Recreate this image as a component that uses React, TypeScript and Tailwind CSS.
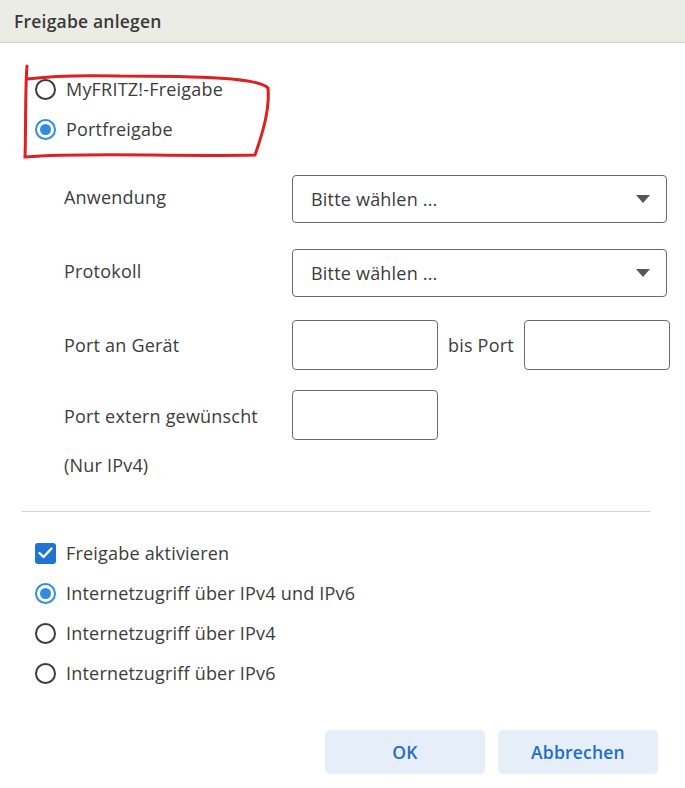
import React from "react";

const font = { fontFamily: '"Open Sans", "Noto Sans", sans-serif' };
const txt = "text-[18px] tracking-[0.2px] text-[#3c3c3c]";

function Radio({ checked, label }: { checked?: boolean; label: string }) {
  return (
    <div className="flex items-center h-[40px]">
      <div className="w-[44px] flex justify-center">
        {checked ? (
          <div className="w-[21px] h-[21px] rounded-full border-2 border-[#2f8be0] flex items-center justify-center">
            <div className="w-[11px] h-[11px] rounded-full bg-[#2f8be0]" />
          </div>
        ) : (
          <div className="w-[21px] h-[21px] rounded-full border-2 border-[#3b3b3b]" />
        )}
      </div>
      <span className={"ml-[-1px] " + txt}>{label}</span>
    </div>
  );
}

function Select() {
  return (
    <div className="w-[375px] h-[48px] border border-[#6b6b6b] rounded-[4px] flex items-center justify-between pl-[18px] pr-[16px]">
      <span className={txt}>Bitte wählen ...</span>
      <svg width="14" height="8" viewBox="0 0 14 8"><path d="M0 0 L14 0 L7 8 Z" fill="#555" /></svg>
    </div>
  );
}

function Input() {
  return <div className="w-[146px] h-[50px] border border-[#6b6b6b] rounded-[4px]" />;
}

export default function App() {
  return (
    <div className="w-[685px] h-[788px] bg-white relative" style={font}>
      <div className="h-[43px] bg-[#ecece6] border-b border-[#d2d2d0] flex items-center pl-[14px]">
        <span className="text-[17.5px] tracking-[0.2px] font-semibold text-[#3a3a3a]">Freigabe anlegen</span>
      </div>
      <div className="pl-[23px] pt-[26px]">
        <Radio label="MyFRITZ!-Freigabe" />
        <Radio checked label="Portfreigabe" />
      </div>
      <div className={"pl-[64px] pt-[26px] " + txt}>
        <div className="flex items-center h-[48px]">
          <span className="w-[228px] -mt-[4px]">Anwendung</span>
          <Select />
        </div>
        <div className="flex items-center h-[50px] mt-[25px]">
          <span className="w-[228px] -mt-[4px]">Protokoll</span>
          <Select />
        </div>
        <div className="flex items-center h-[50px] mt-[22px]">
          <span className="w-[228px]">Port an Gerät</span>
          <Input />
          <span className="ml-[10px] mr-[10px]">bis Port</span>
          <Input />
        </div>
        <div className="flex items-center h-[50px] mt-[20px]">
          <span className="w-[228px] mt-[2px]">Port extern gewünscht</span>
          <Input />
        </div>
        <div className="mt-[12px]">(Nur IPv4)</div>
      </div>
      <div className="ml-[22px] w-[628px] h-px bg-[#d0d0d0] mt-[32px]" />
      <div className="pl-[23px] pt-[21px]">
        <div className="flex items-center h-[40px]">
          <div className="w-[44px] flex justify-center">
            <div className="w-[21px] h-[21px] rounded-[3px] bg-[#1f74cf] flex items-center justify-center">
              <svg width="15" height="12" viewBox="0 0 15 12"><path d="M1.5 6 L5.5 10 L13.5 1.5" stroke="white" strokeWidth="2.4" fill="none" strokeLinecap="round" strokeLinejoin="round" /></svg>
            </div>
          </div>
          <span className={"ml-[-1px] " + txt}>Freigabe aktivieren</span>
        </div>
        <Radio checked label="Internetzugriff über IPv4 und IPv6" />
        <Radio label="Internetzugriff über IPv4" />
        <Radio label="Internetzugriff über IPv6" />
      </div>
      <div className="flex justify-end gap-[13px] pr-[27px] mt-[37px]">
        <button className="w-[160px] h-[44px] rounded-[5px] bg-[#e5eef9] text-[#1f6fc2] font-semibold text-[17.5px] tracking-[0.2px]">OK</button>
        <button className="w-[160px] h-[44px] rounded-[5px] bg-[#e5eef9] text-[#1f6fc2] font-semibold text-[17.5px] tracking-[0.2px]">Abbrechen</button>
      </div>
      <svg className="absolute left-0 top-0 pointer-events-none" width="685" height="200">
        <path d="M27 66 C25 90 26 130 25 157 C90 152 170 157 255 155 C262 135 270 110 268 88 C260 78 200 76 120 76 C80 75 50 76 27 79" stroke="#e02020" strokeWidth="3" fill="none" strokeLinecap="round" />
      </svg>
    </div>
  );
}
